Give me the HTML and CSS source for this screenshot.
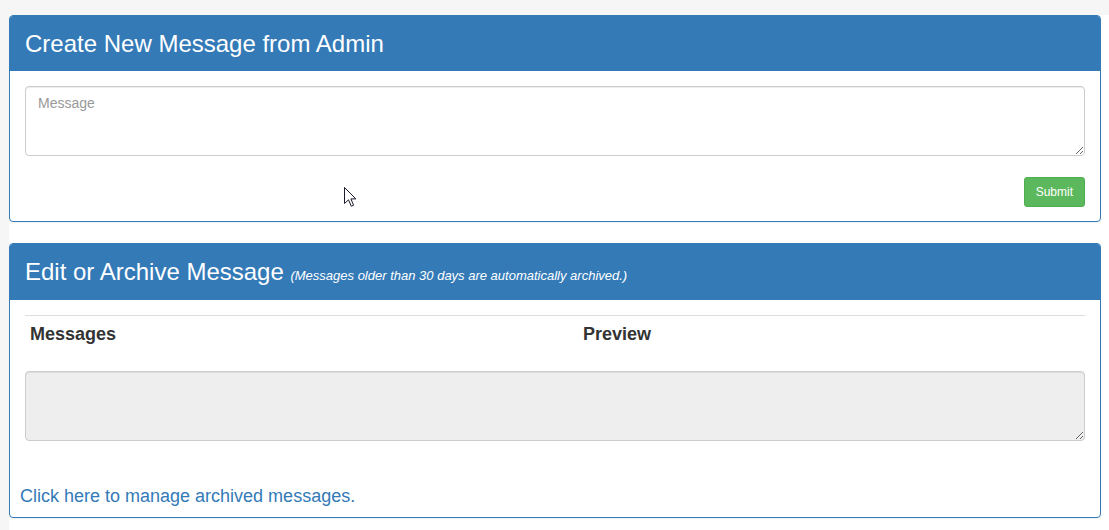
FILE: index.html
```html
<!DOCTYPE html>
<html lang="en">
<head>
<meta charset="utf-8">
<title>Admin Messages</title>
<link rel="stylesheet" href="styles.css">
</head>
<body>
<div class="page">
  <section class="panel">
    <header class="panel-heading">
      <h3 class="panel-title">Create New Message from Admin</h3>
    </header>
    <div class="panel-body body-compact">
      <textarea class="form-control" placeholder="Message"></textarea>
      <div class="actions">
        <button class="btn btn-success">Submit</button>
      </div>
    </div>
  </section>

  <section class="panel">
    <header class="panel-heading heading-tall">
      <h3 class="panel-title">Edit or Archive Message <small class="note">(Messages older than 30 days are automatically archived.)</small></h3>
    </header>
    <div class="panel-body">
      <div class="table-head">
        <div class="th">Messages</div>
        <div class="th">Preview</div>
      </div>
      <textarea class="form-control disabled" disabled></textarea>
    </div>
    <div class="panel-foot">
      <a class="link" href="#">Click here to manage archived messages.</a>
    </div>
  </section>

  <svg class="cursor" width="13" height="20" viewBox="0 0 13 20" aria-hidden="true">
    <path d="M0.5 0.5 L0.5 16.5 L4.5 12.8 L7.3 19.2 L9.6 18.2 L6.9 11.9 L11.9 11.9 Z" fill="#fff" stroke="#1a1a2a" stroke-width="1" stroke-linejoin="round"/>
  </svg>
</div>
</body>
</html>
```

FILE: styles.css
```css
* { box-sizing: border-box; }

html, body {
  margin: 0;
  padding: 0;
  height: 100%;
}

body {
  background: #f6f6f6;
  font-family: "Liberation Sans", Arial, Helvetica, sans-serif;
  font-size: 14px;
  color: #333;
}

.page {
  position: relative;
  margin: 15px 0 0 9px;
  padding: 0 8px 0 0;
  background: #fff;
  min-height: calc(100% - 15px);
}

.panel {
  border: 1px solid #337ab7;
  border-radius: 4px;
  background: #fff;
  box-shadow: 0 1px 1px rgba(0, 0, 0, 0.05);
  margin-bottom: 21px;
  overflow: hidden;
}

.panel-heading {
  background: #337ab7;
  color: #fff;
  padding: 14px 15px;
}

.heading-tall {
  padding-bottom: 15px;
}

.panel-title {
  margin: 0;
  font-size: 24px;
  font-weight: normal;
  line-height: 27px;
}

.note {
  font-size: 13px;
  font-style: italic;
  line-height: 0;
}

.panel-body {
  padding: 15px;
}

.body-compact {
  padding-bottom: 14px;
}

.form-control {
  display: block;
  width: 100%;
  height: 70px;
  margin: 0;
  padding: 6px 12px;
  font-family: inherit;
  font-size: 14px;
  line-height: 20px;
  color: #555;
  background: #fff;
  border: 1px solid #ccc;
  border-radius: 4px;
  box-shadow: inset 0 1px 1px rgba(0, 0, 0, 0.075);
  resize: vertical;
}

.form-control::placeholder {
  color: #999;
}

.form-control.disabled {
  background: #eee;
}

.actions {
  display: flex;
  justify-content: flex-end;
  margin-top: 21px;
}

.btn {
  font-family: inherit;
  font-size: 12px;
  line-height: 18px;
  padding: 5px 11px;
  border-radius: 3px;
  border: 1px solid #4cae4c;
  cursor: pointer;
}

.btn-success {
  background: #5cb85c;
  color: #fff;
}

.table-head {
  display: grid;
  grid-template-columns: 553fr 507fr;
  border-top: 1px solid #ddd;
  margin-bottom: 19px;
}

.th {
  padding: 8px 5px;
  font-size: 18px;
  font-weight: bold;
  line-height: 20px;
  color: #333;
}

.panel-foot {
  padding: 28px 10px 9px;
  font-size: 18px;
  line-height: 24px;
}

.link {
  color: #337ab7;
  text-decoration: none;
}

.cursor {
  position: absolute;
  left: 335px;
  top: 172px;
}
```
